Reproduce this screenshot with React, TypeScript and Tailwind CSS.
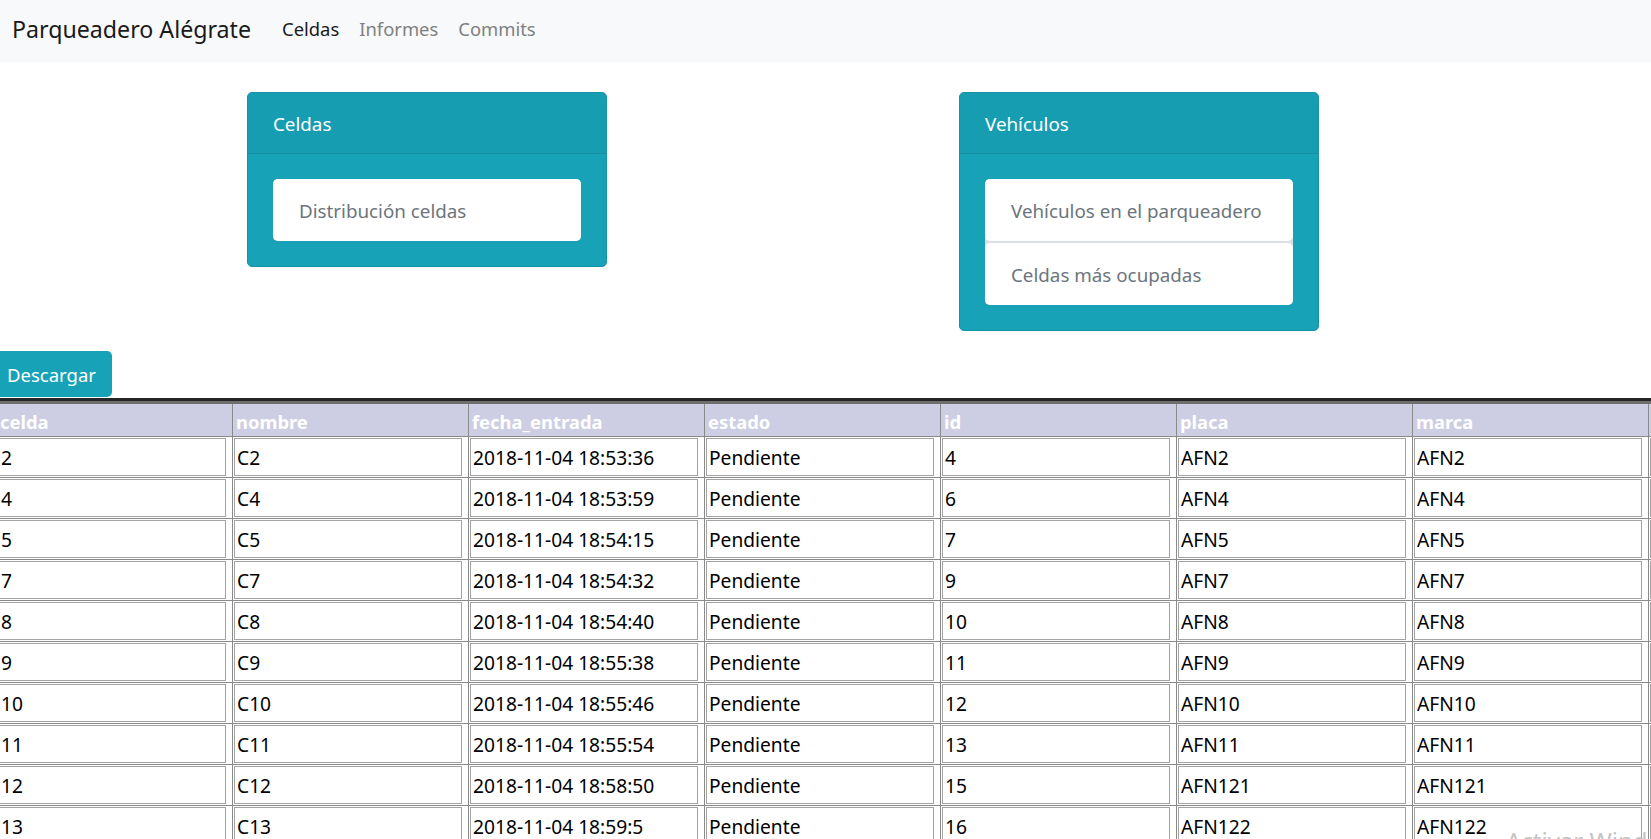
import React from "react";

const rows = [
  ["2", "C2", "2018-11-04 18:53:36", "Pendiente", "4", "AFN2", "AFN2"],
  ["4", "C4", "2018-11-04 18:53:59", "Pendiente", "6", "AFN4", "AFN4"],
  ["5", "C5", "2018-11-04 18:54:15", "Pendiente", "7", "AFN5", "AFN5"],
  ["7", "C7", "2018-11-04 18:54:32", "Pendiente", "9", "AFN7", "AFN7"],
  ["8", "C8", "2018-11-04 18:54:40", "Pendiente", "10", "AFN8", "AFN8"],
  ["9", "C9", "2018-11-04 18:55:38", "Pendiente", "11", "AFN9", "AFN9"],
  ["10", "C10", "2018-11-04 18:55:46", "Pendiente", "12", "AFN10", "AFN10"],
  ["11", "C11", "2018-11-04 18:55:54", "Pendiente", "13", "AFN11", "AFN11"],
  ["12", "C12", "2018-11-04 18:58:50", "Pendiente", "15", "AFN121", "AFN121"],
  ["13", "C13", "2018-11-04 18:59:5", "Pendiente", "16", "AFN122", "AFN122"],
];

const columns = ["celda", "nombre", "fecha_entrada", "estado", "id", "placa", "marca", ""];

function InfoCard({ title, items }: { title: string; items: string[] }) {
  return (
    <div className="w-[360px] rounded-[5px] border border-[#1592a6] bg-[#17a2b8] overflow-hidden">
      {/* card header */}
      <div className="h-[61px] flex items-center pl-[25px] pt-[2px] bg-[#169db2] border-b border-[#148ea1] text-white text-[18.8px]">
        {title}
      </div>
      <div className="p-[25px]">
        <div className="flex flex-col gap-[2px] bg-[#dcdfe2] rounded-[5px]">
          {items.map((item) => (
            <div
              key={item}
              className="h-[62px] flex items-center pl-[26px] pt-[3px] bg-white rounded-[5px] text-[18.8px] text-[#6c757d]"
            >
              {item}
            </div>
          ))}
        </div>
      </div>
    </div>
  );
}

export default function App() {
  return (
    <div className="relative min-h-screen w-full overflow-hidden bg-white font-['Noto_Sans',sans-serif]">
      {/* Navbar */}
      <nav className="h-[62px] bg-[#f8f9fa] flex items-center pl-[12px] pb-[4px]">
        <span className="text-[23.2px] text-[#1a1a1a] mr-[31px]">Parqueadero Alégrate</span>
        <span className="text-[18.4px] text-[#1a1a1a] mr-[20px]">Celdas</span>
        <span className="text-[18.4px] text-[#808080] mr-[20px]">Informes</span>
        <span className="text-[18.4px] text-[#808080]">Commits</span>
      </nav>

      {/* Cards */}
      <div className="flex items-start pt-[30px] pl-[247px] gap-[352px]">
        <InfoCard title="Celdas" items={["Distribución celdas"]} />
        <InfoCard
          title="Vehículos"
          items={["Vehículos en el parqueadero", "Celdas más ocupadas"]}
        />
      </div>

      {/* Download button */}
      <div className="flex mt-[20px] -ml-[9px]">
        <button className="h-[46px] px-[16px] pt-[2px] rounded-[5px] bg-[#17a2b8] text-white text-[18.5px]">
          Descargar
        </button>
      </div>

      {/* Table */}
      <div className="mt-[1px] -ml-[4px] w-[1888px] border-t-[3px] border-[#262626]">
        <table className="table-fixed border-collapse w-[1888px]">
          <thead>
            <tr className="border-t-[3px] border-[#6e6e6e]">
              {columns.map((c, i) => (
                <th
                  key={i}
                  className="w-[236px] h-[32px] p-0 pl-[3px] pt-[4px] text-left align-middle bg-[#cdcee3] border-l border-[#8a8a8a] text-white font-bold text-[18.4px]"
                >
                  {c}
                </th>
              ))}
            </tr>
          </thead>
          <tbody>
            {rows.map((r, ri) => (
              <tr key={ri} className="border-t border-[#8a8a8a]">
                {[...r, ""].map((v, ci) => (
                  <td key={ci} className="w-[236px] p-0 border-l border-[#8a8a8a]">
                    <div className="ml-[1px] mr-[6px] my-[1px] h-[38px] border border-[#a3a3a3] flex items-center pl-[2px] pt-[4px] text-[19.2px] text-black">
                      {v}
                    </div>
                  </td>
                ))}
              </tr>
            ))}
          </tbody>
        </table>
      </div>

      {/* Windows watermark */}
      <div className="absolute left-[1506px] top-[823px] text-[24px] text-[#c4c4c4] whitespace-nowrap">
        Activar Windows
      </div>
    </div>
  );
}
